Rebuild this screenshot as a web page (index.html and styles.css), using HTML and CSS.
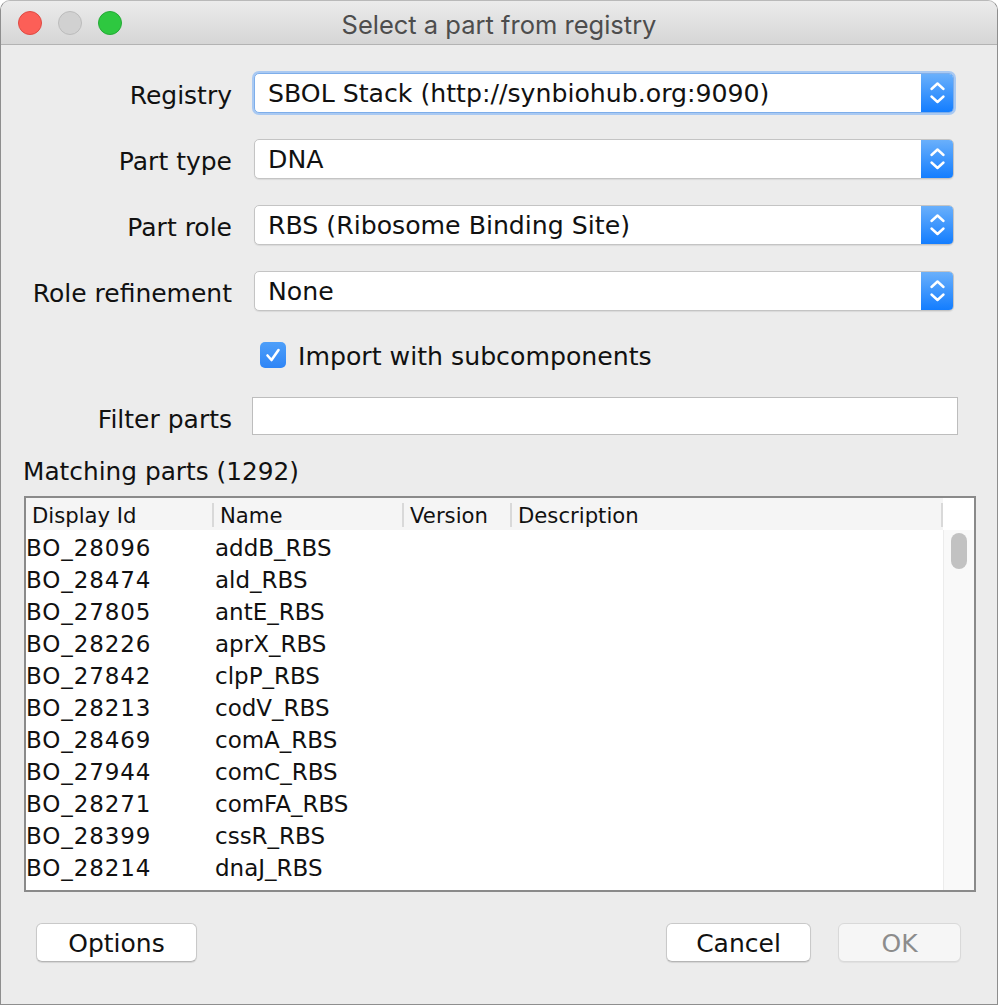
FILE: index.html
```html
<!DOCTYPE html>
<html>
<head>
<meta charset="utf-8">
<title>Select a part from registry</title>
<link rel="stylesheet" href="styles.css">
</head>
<body>
<div class="window">
  <div class="titlebar">
    <div class="lights">
      <span class="light red"></span>
      <span class="light grey"></span>
      <span class="light green"></span>
    </div>
    <div class="title">Select a part from registry</div>
  </div>
  <div class="content">
    <div class="form">
      <label class="lbl">Registry</label>
      <div class="combo focused">
        <span class="combo-text">SBOL Stack (http://synbiohub.org:9090)</span>
        <span class="combo-btn"><svg viewBox="0 0 33 40" width="33" height="40"><path d="M10.5 16 L16.5 10.5 L22.5 16 M10.5 23.5 L16.5 29 L22.5 23.5" fill="none" stroke="#fff" stroke-width="2.4" stroke-linecap="round" stroke-linejoin="round"/></svg></span>
      </div>
      <label class="lbl">Part type</label>
      <div class="combo">
        <span class="combo-text">DNA</span>
        <span class="combo-btn"><svg viewBox="0 0 33 40" width="33" height="40"><path d="M10.5 16 L16.5 10.5 L22.5 16 M10.5 23.5 L16.5 29 L22.5 23.5" fill="none" stroke="#fff" stroke-width="2.4" stroke-linecap="round" stroke-linejoin="round"/></svg></span>
      </div>
      <label class="lbl">Part role</label>
      <div class="combo">
        <span class="combo-text">RBS (Ribosome Binding Site)</span>
        <span class="combo-btn"><svg viewBox="0 0 33 40" width="33" height="40"><path d="M10.5 16 L16.5 10.5 L22.5 16 M10.5 23.5 L16.5 29 L22.5 23.5" fill="none" stroke="#fff" stroke-width="2.4" stroke-linecap="round" stroke-linejoin="round"/></svg></span>
      </div>
      <label class="lbl">Role refinement</label>
      <div class="combo">
        <span class="combo-text">None</span>
        <span class="combo-btn"><svg viewBox="0 0 33 40" width="33" height="40"><path d="M10.5 16 L16.5 10.5 L22.5 16 M10.5 23.5 L16.5 29 L22.5 23.5" fill="none" stroke="#fff" stroke-width="2.4" stroke-linecap="round" stroke-linejoin="round"/></svg></span>
      </div>
      <span class="lbl"></span>
      <div class="check-row">
        <span class="checkbox"><svg viewBox="0 0 26 26" width="26" height="26"><path d="M7.5 13.5 L11.5 18 L18.5 8" fill="none" stroke="#fff" stroke-width="2.6" stroke-linecap="round" stroke-linejoin="round"/></svg></span>
        <span class="check-label">Import with subcomponents</span>
      </div>
      <label class="lbl">Filter parts</label>
      <div class="textfield"></div>
    </div>

    <div class="section-label">Matching parts (1292)</div>

    <div class="table">
      <div class="thead">
        <div class="th">Display Id</div>
        <div class="th">Name</div>
        <div class="th">Version</div>
        <div class="th">Description</div>
      </div>
      <div class="corner"></div>
      <div class="tbody">
        <div class="tr"><span class="td id">BO_28096</span><span class="td nm">addB_RBS</span></div>
        <div class="tr"><span class="td id">BO_28474</span><span class="td nm">ald_RBS</span></div>
        <div class="tr"><span class="td id">BO_27805</span><span class="td nm">antE_RBS</span></div>
        <div class="tr"><span class="td id">BO_28226</span><span class="td nm">aprX_RBS</span></div>
        <div class="tr"><span class="td id">BO_27842</span><span class="td nm">clpP_RBS</span></div>
        <div class="tr"><span class="td id">BO_28213</span><span class="td nm">codV_RBS</span></div>
        <div class="tr"><span class="td id">BO_28469</span><span class="td nm">comA_RBS</span></div>
        <div class="tr"><span class="td id">BO_27944</span><span class="td nm">comC_RBS</span></div>
        <div class="tr"><span class="td id">BO_28271</span><span class="td nm">comFA_RBS</span></div>
        <div class="tr"><span class="td id">BO_28399</span><span class="td nm">cssR_RBS</span></div>
        <div class="tr"><span class="td id">BO_28214</span><span class="td nm">dnaJ_RBS</span></div>
        <div class="tr"><span class="td id">BO_28420</span><span class="td nm">dnaG_RBS</span></div>
      </div>
      <div class="scrollbar"><div class="thumb"></div></div>
    </div>

    <div class="buttons">
      <button class="btn options">Options</button>
      <div class="spacer"></div>
      <button class="btn cancel">Cancel</button>
      <button class="btn ok" disabled>OK</button>
    </div>
  </div>
</div>
</body>
</html>
```

FILE: styles.css
```css
html, body {
  margin: 0;
  padding: 0;
  background: #ffffff;
}
body {
  font-family: "DejaVu Sans", "Liberation Sans", sans-serif;
  color: #111;
}
.window {
  width: 998px;
  height: 1005px;
  box-sizing: border-box;
  border: 1px solid #8e8e8e;
  border-top-color: #b9b9b9;
  border-radius: 10px 10px 0 0;
  background: #ececec;
  overflow: hidden;
  display: flex;
  flex-direction: column;
}
.titlebar {
  height: 44px;
  flex: none;
  box-sizing: border-box;
  background: linear-gradient(#ebebeb, #d6d6d6);
  border-bottom: 1px solid #b3b3b3;
  display: flex;
  align-items: center;
  position: relative;
}
.lights {
  display: flex;
  gap: 16px;
  padding-left: 17px;
  padding-top: 1px;
}
.light {
  width: 24px;
  height: 24px;
  border-radius: 50%;
  box-sizing: border-box;
}
.light.red { background: #fc5f57; border: 1px solid #df4a43; }
.light.grey { background: #d1d1d1; border: 1px solid #bcbcbc; }
.light.green { background: #2ec840; border: 1px solid #25a936; }
.title {
  position: absolute;
  left: 0;
  right: 0;
  top: 0;
  bottom: 0;
  display: flex;
  align-items: center;
  justify-content: center;
  font-family: Inter, "DejaVu Sans", sans-serif;
  font-size: 25.5px;
  color: #4d4d4d;
  padding-top: 3px;
  pointer-events: none;
}
.content {
  flex: 1;
  display: flex;
  flex-direction: column;
  padding: 28px 23px 0 23px;
}
.form {
  display: grid;
  grid-template-columns: 208px 706px;
  column-gap: 20px;
  row-gap: 26px;
  align-items: center;
}
.lbl {
  text-align: right;
  font-size: 25px;
  color: #111;
  padding-top: 4px;
}
.combo {
  height: 40px;
  margin: 0 4px 0 2px;
  box-sizing: border-box;
  background: #fff;
  border: 1px solid #c4c4c4;
  border-radius: 5px;
  box-shadow: 0 1px 1px rgba(0,0,0,0.08);
  display: flex;
  align-items: stretch;
  overflow: hidden;
}
.combo.focused {
  border-color: #7eaeea;
  box-shadow: 0 0 0 2px #a9c9f2;
}
.combo-text {
  flex: 1;
  display: flex;
  align-items: center;
  padding-left: 13px;
  padding-top: 1px;
  font-size: 25.2px;
  color: #111;
  white-space: nowrap;
}
.combo-btn {
  width: 33px;
  flex: none;
  background: linear-gradient(#6cb1fb, #117cff);
  display: flex;
  align-items: center;
  justify-content: center;
  margin: -1px -1px -1px 0;
}
.combo-btn svg { display: block; }
.check-row {
  height: 36px;
  display: flex;
  align-items: center;
  padding-left: 8px;
}
.checkbox {
  width: 26px;
  height: 26px;
  border-radius: 5px;
  background: linear-gradient(#4e9ff9, #2f85f6);
  display: flex;
  flex: none;
}
.check-label {
  font-size: 25.2px;
  margin-left: 12px;
  padding-top: 3px;
  color: #111;
}
.textfield {
  height: 38px;
  box-sizing: border-box;
  background: #fff;
  border: 1px solid #bdbdbd;
  margin-top: -2px;
}
.section-label {
  font-size: 24.8px;
  margin-top: 20px;
  height: 30px;
  line-height: 30px;
  color: #111;
  padding-top: 2px;
  margin-left: -1px;
}
.table {
  margin-top: 9px;
  height: 396px;
  width: 952px;
  box-sizing: border-box;
  border: 2px solid #8a8a8a;
  background: #fff;
  display: grid;
  grid-template-columns: 917px 31px;
  grid-template-rows: 32px 1fr;
  overflow: hidden;
}
.thead {
  display: grid;
  grid-template-columns: 188px 190px 108px 1fr;
  background: #f5f5f5;
}
.th {
  font-size: 21.2px;
  line-height: 32px;
  padding-left: 6px;
  padding-top: 2px;
  color: #111;
  background: linear-gradient(#d9d9d9, #d9d9d9) right center / 2px 24px no-repeat;
  white-space: nowrap;
}
.corner {
  background: #fff;
}
.tbody {
  overflow: hidden;
}
.tr {
  height: 32px;
  display: flex;
  align-items: center;
  font-size: 23px;
  color: #111;
  padding-top: 3px;
  box-sizing: border-box;
}
.td.id {
  width: 188px;
  padding-left: 0;
  letter-spacing: 0.9px;
}
.td.nm {
  padding-left: 1px;
}
.scrollbar {
  background: #f9f9f9;
  border-left: 1px solid #ececec;
  padding: 3px 0 0 7px;
}
.thumb {
  width: 16px;
  height: 36px;
  border-radius: 8px;
  background: #c2c2c2;
}
.buttons {
  display: flex;
  align-items: center;
  margin-top: 31px;
  padding: 0 13px 0 12px;
}
.spacer { flex: 1; }
.btn {
  height: 39px;
  box-sizing: border-box;
  font-family: "DejaVu Sans", "Liberation Sans", sans-serif;
  font-size: 25px;
  color: #111;
  background: #fff;
  border: 1px solid #c9c9c9;
  border-bottom-color: #b5b5b5;
  border-radius: 6px;
  box-shadow: 0 1px 1px rgba(0,0,0,0.1);
  padding: 2px 0 0 0;
}
.btn.options { width: 161px; }
.btn.cancel { width: 145px; margin-right: 27px; }
.btn.ok {
  width: 123px;
  background: #f6f6f6;
  color: #8c8c8c;
  border-color: #d9d9d9;
  box-shadow: 0 1px 1px rgba(0,0,0,0.05);
}
```
